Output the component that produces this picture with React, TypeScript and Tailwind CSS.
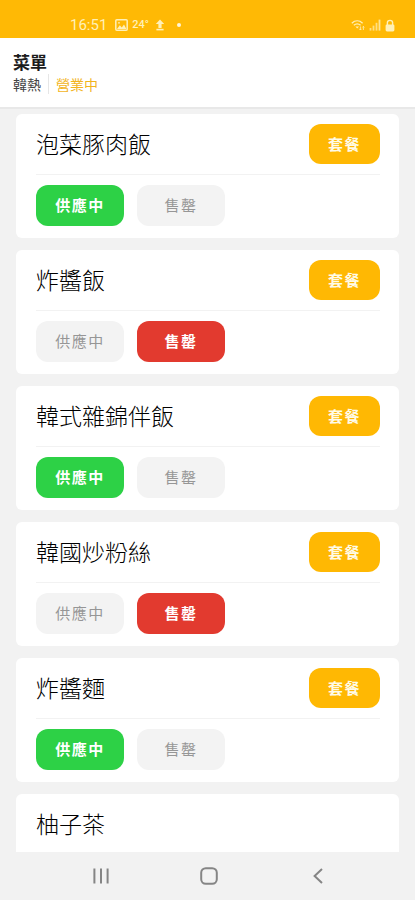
import { useState } from 'react';

type MenuItem = {
  id: number;
  name: string;
  isSet: boolean;
  // undefined while the stock status is not managed
  available?: boolean;
};

const INITIAL_ITEMS: MenuItem[] = [
  { id: 1, name: '泡菜豚肉飯', isSet: true, available: true },
  { id: 2, name: '炸醬飯', isSet: true, available: false },
  { id: 3, name: '韓式雜錦伴飯', isSet: true, available: true },
  { id: 4, name: '韓國炒粉絲', isSet: true, available: false },
  { id: 5, name: '炸醬麵', isSet: true, available: true },
  { id: 6, name: '柚子茶', isSet: false },
];

function StatusBar() {
  return (
    <div className="flex h-[38px] shrink-0 items-end justify-between bg-[#ffb905] pr-5 pb-[3px] pl-[70px] text-[#fff0b8]">
      <div className="flex h-5 items-center">
        <span className="font-[Roboto,sans-serif] text-[15px] leading-5">16:51</span>
        <svg className="ml-2 h-3 w-[13px]" viewBox="0 0 13 12" fill="none" stroke="currentColor">
          <rect x="0.8" y="0.8" width="11.4" height="10.4" rx="1" strokeWidth="1.5" />
          <path d="M2 10 4.8 6.2 6.8 8.4 9 5.6 11.4 10Z" fill="currentColor" stroke="none" />
          <circle cx="4" cy="3.8" r="0.9" fill="currentColor" stroke="none" />
        </svg>
        <span className="ml-1 font-[Roboto,sans-serif] text-[11px] leading-5 font-medium">24°</span>
        <svg className="ml-1.5 h-3 w-[10px]" viewBox="0 0 10 12" fill="currentColor">
          <path d="M5 0.6 9.2 5H6.6V9H3.4V5H0.8Z" />
          <rect x="1.4" y="9.8" width="7.2" height="1.6" />
        </svg>
        <span className="ml-3 h-1 w-1 rounded-full bg-[#fff6d8]" />
      </div>
      <div className="flex h-5 items-center gap-1">
        <svg className="h-3 w-[14px]" viewBox="0 0 14 12" fill="none" stroke="currentColor">
          <path d="M0.8 4.2C4 1.2 8.4 1.2 11.6 4.2M2.8 6.2C5 4.4 7.4 4.4 9.6 6.2" strokeWidth="1.3" />
          <path d="M4.4 7.4 6.2 9.4 8 7.4Z" fill="currentColor" stroke="none" />
          <path d="M9.4 7.4V11M8.2 9.8 9.4 11 10.6 9.8M12.4 11V7.4M11.4 8.4 12.4 7.4 13.4 8.4" strokeWidth="0.8" />
        </svg>
        <svg className="h-3 w-[12px]" viewBox="0 0 12 12" fill="currentColor">
          <rect x="0.6" y="9" width="1.8" height="2.6" opacity="0.7" />
          <rect x="3.6" y="6.6" width="1.8" height="5" opacity="0.7" />
          <rect x="6.6" y="3.8" width="1.8" height="7.8" opacity="0.7" />
          <rect x="9.6" y="0.6" width="1.8" height="11" opacity="0.8" />
        </svg>
        <svg className="h-[13px] w-[10px]" viewBox="0 0 10 13" fill="none">
          <path d="M2.4 6V3.6C2.4 0.6 7.6 0.6 7.6 3.6V6" stroke="currentColor" strokeWidth="1.4" />
          <rect x="0.6" y="5.4" width="8.8" height="7" rx="1.4" fill="currentColor" />
        </svg>
      </div>
    </div>
  );
}

function MenuCard({ item, onChange }: { item: MenuItem; onChange: (available: boolean) => void }) {
  return (
    <li className="shrink-0 rounded-md bg-white pt-[10px] pr-[19px] pb-3 pl-5">
      <div className="flex min-h-[51px] items-start justify-between border-b border-[#f2f2f2] pb-[10px]">
        <h2 className="text-[23px] leading-[38px] font-light text-black">{item.name}</h2>
        {item.isSet && (
          <button
            type="button"
            className="h-10 w-[71px] rounded-xl bg-[#ffb803] text-[15px] font-bold tracking-widest text-[#fffbe8]"
          >
            套餐
          </button>
        )}
      </div>
      {item.available !== undefined && (
        <div className="mt-[10px] flex gap-[13px]">
          <button
            type="button"
            aria-pressed={item.available}
            onClick={() => onChange(true)}
            className={`h-[41px] w-[88px] rounded-xl text-[15px] tracking-widest ${
              item.available ? 'bg-[#2dd146] font-bold text-white' : 'bg-[#f3f3f3] text-[#969696]'
            }`}
          >
            供應中
          </button>
          <button
            type="button"
            aria-pressed={!item.available}
            onClick={() => onChange(false)}
            className={`h-[41px] w-[88px] rounded-xl text-[15px] tracking-widest ${
              item.available ? 'bg-[#f3f3f3] text-[#969696]' : 'bg-[#e23a2f] font-bold text-white'
            }`}
          >
            售罄
          </button>
        </div>
      )}
    </li>
  );
}

function NavBar() {
  return (
    <nav className="grid h-12 shrink-0 grid-cols-3 items-center bg-[#f2f2f2] pr-[43px] pl-[47px] text-[#858585]">
      <button type="button" aria-label="最近" className="flex justify-center">
        <svg className="h-4 w-[18px]" viewBox="0 0 18 16" stroke="currentColor" strokeWidth="2">
          <path d="M2.4 0.5V15.5M9 0.5V15.5M15.6 0.5V15.5" />
        </svg>
      </button>
      <button type="button" aria-label="主頁" className="flex justify-center">
        <svg className="h-[18px] w-[18px]" viewBox="0 0 18 18" fill="none" stroke="currentColor" strokeWidth="2">
          <rect x="1.2" y="1.2" width="15.6" height="15.6" rx="4.6" />
        </svg>
      </button>
      <button type="button" aria-label="返回" className="flex justify-center">
        <svg className="h-4 w-[10px]" viewBox="0 0 10 16" fill="none" stroke="currentColor" strokeWidth="2">
          <path d="M9 1 1.6 8 9 15" />
        </svg>
      </button>
    </nav>
  );
}

export default function App() {
  const [items, setItems] = useState(INITIAL_ITEMS);

  function setAvailable(id: number, available: boolean) {
    setItems((prev) => prev.map((item) => (item.id === id ? { ...item, available } : item)));
  }

  return (
    <div className="flex h-screen flex-col overflow-hidden bg-[#f2f2f2] font-['Noto_Sans_CJK_TC',sans-serif]">
      <StatusBar />
      <header className="shrink-0 border-b-2 border-[#e8e8e8] bg-white px-[13px] pt-[13px] pb-3">
        <h1 className="text-[17px] leading-[22px] font-bold text-[#1c1c1c]">菜單</h1>
        <div className="flex h-[22px] items-center text-sm">
          <span className="text-[#444444]">韓熱</span>
          <span className="mx-[7px] h-5 w-px bg-[#e6e6e6]" />
          <span className="text-[#f2b41c]">營業中</span>
        </div>
      </header>
      <main className="min-h-0 flex-1 overflow-hidden px-4 pt-[5px]">
        <ul className="flex flex-col gap-3">
          {items.map((item) => (
            <MenuCard
              key={item.id}
              item={item}
              onChange={(available) => setAvailable(item.id, available)}
            />
          ))}
        </ul>
      </main>
      <NavBar />
    </div>
  );
}
